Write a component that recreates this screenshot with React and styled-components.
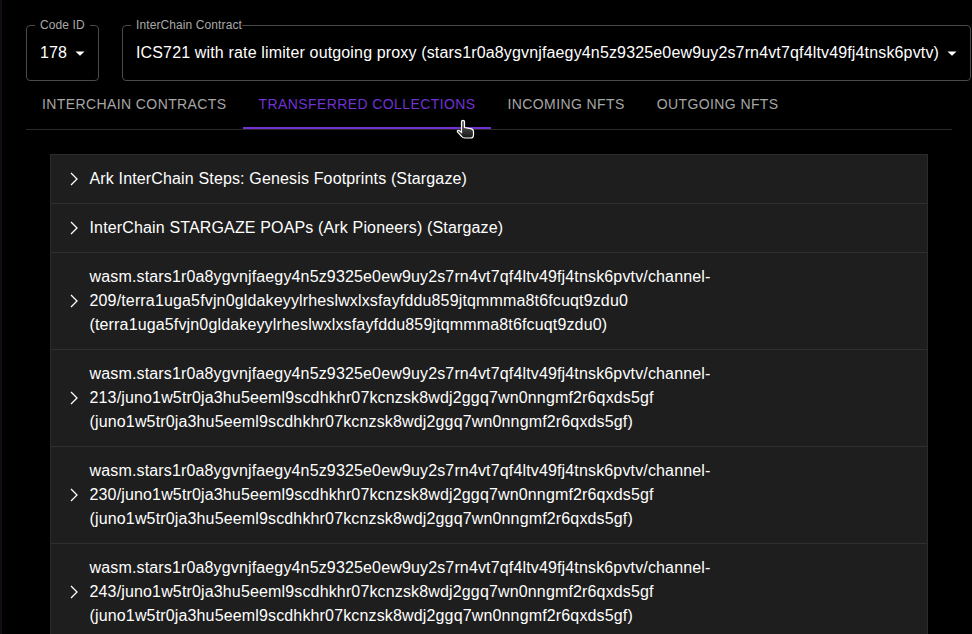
import styled, { createGlobalStyle } from 'styled-components'

const Global = createGlobalStyle`
  html, body {
    margin: 0;
    height: 634px;
    overflow: hidden;
    background: #000;
  }
`

const Page = styled.div`
  height: 634px;
  overflow: hidden;
  background: #000;
  color: #fff;
  font-family: "Liberation Sans", Arial, sans-serif;
  padding: 18px 0 0 24px;
  border-left: 2px solid #140c14;
  box-sizing: border-box;
  width: 972px;
  position: relative;
`

const Selects = styled.div`
  display: flex;
  gap: 23px;
`

const Field = styled.fieldset`
  margin: 0;
  padding: 0 9px 0 13px;
  width: ${p => p.$width}px;
  height: 63px;
  box-sizing: border-box;
  border: 1px solid #4a4a4a;
  border-radius: 4px;
  display: flex;
  align-items: center;
  justify-content: space-between;
  min-inline-size: 0;
`

const Legend = styled.legend`
  margin-left: -5px;
  padding: 0 ${p => p.$right}px 0 5px;
  font-size: 12px;
  line-height: 14px;
  letter-spacing: 0.1px;
  white-space: nowrap;
  color: #a9a9a9;
`

const Value = styled.span`
  display: block;
  font-size: 16px;
  line-height: 24px;
  letter-spacing: 0.15px;
  white-space: nowrap;
  position: relative;
  top: -3px;
`

const Caret = styled.svg`
  width: 24px;
  height: 24px;
  fill: #fff;
  flex: none;
  margin-right: -2.5px;
  position: relative;
  top: -3px;
`

const Tabs = styled.div`
  display: flex;
  width: 926px;
  height: 49px;
  box-sizing: border-box;
  border-bottom: 1px solid #2a2a2a;
`

const Tab = styled.div`
  padding: 0 16px;
  height: 48px;
  line-height: 46px;
  font-size: 14px;
  letter-spacing: 0.4px;
  text-transform: uppercase;
  white-space: nowrap;
  box-sizing: border-box;
  color: ${p => (p.$active ? '#7132d3' : '#a6a6a6')};
  border-bottom: 2px solid ${p => (p.$active ? '#7132d3' : 'transparent')};
`

const Accordion = styled.div`
  width: 878px;
  margin: 24px 0 0 24px;
  box-sizing: border-box;
  background: #1e1e1e;
  border: 1px solid #2b2b2b;
  border-bottom: 0;
`

const Row = styled.div`
  display: flex;
  align-items: center;
  gap: 9.5px;
  padding: 12px 16px 12px 15px;
  min-height: 48px;
  box-sizing: border-box;
  border-bottom: 1px solid #2f2f2f;
`

const Chevron = styled.svg`
  width: 14px;
  height: 14px;
  flex: none;
  fill: none;
  stroke: #fff;
  stroke-width: 1.3;
`

const RowText = styled.div`
  font-size: 16px;
  line-height: 24px;
  letter-spacing: 0.15px;
  width: 640px;
  color: #fff;
`

const Cursor = styled.svg`
  position: absolute;
  left: 454px;
  top: 119px;
  width: 20px;
  height: 22px;
`

const rows = [
  'Ark InterChain Steps: Genesis Footprints (Stargaze)',
  'InterChain STARGAZE POAPs (Ark Pioneers) (Stargaze)',
  ['wasm.stars1r0a8ygvnjfaegy4n5z9325e0ew9uy2s7rn4vt7qf4ltv49fj4tnsk6pvtv/channel-', '209/terra1uga5fvjn0gldakeyylrheslwxlxsfayfddu859jtqmmma8t6fcuqt9zdu0', '(terra1uga5fvjn0gldakeyylrheslwxlxsfayfddu859jtqmmma8t6fcuqt9zdu0)'],
  ['wasm.stars1r0a8ygvnjfaegy4n5z9325e0ew9uy2s7rn4vt7qf4ltv49fj4tnsk6pvtv/channel-', '213/juno1w5tr0ja3hu5eeml9scdhkhr07kcnzsk8wdj2ggq7wn0nngmf2r6qxds5gf', '(juno1w5tr0ja3hu5eeml9scdhkhr07kcnzsk8wdj2ggq7wn0nngmf2r6qxds5gf)'],
  ['wasm.stars1r0a8ygvnjfaegy4n5z9325e0ew9uy2s7rn4vt7qf4ltv49fj4tnsk6pvtv/channel-', '230/juno1w5tr0ja3hu5eeml9scdhkhr07kcnzsk8wdj2ggq7wn0nngmf2r6qxds5gf', '(juno1w5tr0ja3hu5eeml9scdhkhr07kcnzsk8wdj2ggq7wn0nngmf2r6qxds5gf)'],
  ['wasm.stars1r0a8ygvnjfaegy4n5z9325e0ew9uy2s7rn4vt7qf4ltv49fj4tnsk6pvtv/channel-', '243/juno1w5tr0ja3hu5eeml9scdhkhr07kcnzsk8wdj2ggq7wn0nngmf2r6qxds5gf', '(juno1w5tr0ja3hu5eeml9scdhkhr07kcnzsk8wdj2ggq7wn0nngmf2r6qxds5gf)'],
]

const tabs = ['Interchain Contracts', 'Transferred Collections', 'Incoming NFTs', 'Outgoing NFTs']

function DownCaret() {
  return (
    <Caret viewBox="0 0 24 24">
      <path d="M7.5 10.5l4.5 4.2 4.5-4.2z" />
    </Caret>
  )
}

function App() {
  return (
    <Page>
      <Global />
      <Selects>
        <Field $width={73}>
          <Legend $right={5}>Code ID</Legend>
          <Value>178</Value>
          <DownCaret />
        </Field>
        <Field $width={849}>
          <Legend $right={0}>InterChain Contract</Legend>
          <Value>ICS721 with rate limiter outgoing proxy (stars1r0a8ygvnjfaegy4n5z9325e0ew9uy2s7rn4vt7qf4ltv49fj4tnsk6pvtv)</Value>
          <DownCaret />
        </Field>
      </Selects>
      <Tabs>
        {tabs.map((t, i) => (
          <Tab key={t} $active={i === 1}>{t}</Tab>
        ))}
      </Tabs>
      <Accordion>
        {rows.map((r, i) => (
          <Row key={i}>
            <Chevron viewBox="0 0 14 14">
              <path d="M5 1 L11 7 L5 13" />
            </Chevron>
            <RowText>
              {Array.isArray(r) ? r.map(line => <div key={line}>{line}</div>) : r}
            </RowText>
          </Row>
        ))}
      </Accordion>
      <Cursor viewBox="0 0 20 22">
        <defs>
          <linearGradient id="handFill" x1="0" y1="0" x2="0" y2="1">
            <stop offset="0" stopColor="#666" />
            <stop offset="1" stopColor="#161616" />
          </linearGradient>
        </defs>
        <path
          d="M5.5 2.5c0-1.6 3-1.6 3 0V8.5l6 1.2c2 .4 3 1.2 3 3v3c0 1.8-1.2 3.3-3 3.3H8.5c-1.2 0-2-.5-2.8-1.5L1.5 13c-.8-1.2.9-2.3 2-1.3l2 1.8z"
          fill="url(#handFill)"
          stroke="#fff"
          strokeWidth="1.2"
        />
      </Cursor>
    </Page>
  )
}

export default App
